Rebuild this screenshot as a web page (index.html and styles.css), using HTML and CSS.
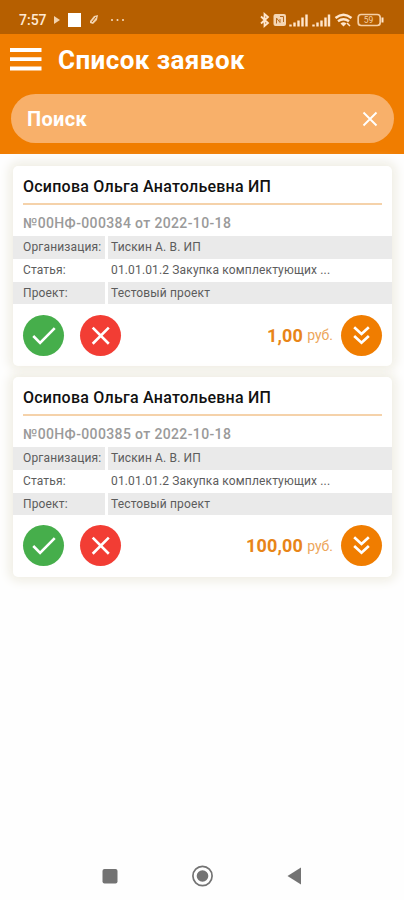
FILE: index.html
```html
<!DOCTYPE html>
<html lang="ru">
<head>
<meta charset="utf-8">
<title>Список заявок</title>
<link rel="stylesheet" href="styles.css">
</head>
<body>
<svg class="defs" width="0" height="0" aria-hidden="true">
  <symbol id="check" viewBox="0 0 42 42"><path d="M10.500 21.500l7 7L32.500 13.500"/></symbol>
  <symbol id="cross" viewBox="0 0 42 42"><path d="M13 13l16.500 16.500M29.500 13L13 29.500"/></symbol>
  <symbol id="more" viewBox="0 0 42 42"><path d="M13.500 12.500l7.500 7 7.500-7M13.500 21.500l7.500 7 7.500-7"/></symbol>
</svg>
<div class="status">
  <span class="clock">7:57</span>
  <svg class="status-left" width="76" height="16" viewBox="50 12 76 16">
    <path d="M54 16l6 4-6 4z" fill="#f2d2ae"/>
    <rect x="68" y="13" width="13" height="14" fill="#fff"/>
    <path d="M90 21l4-5 4-1-1 5-4 4-3-1z" fill="#f2d2ae"/><path d="M92 22l4-5" stroke="#b85f00"/>
    <g fill="#f7dfc4"><circle cx="112" cy="20" r="1"/><circle cx="117.500" cy="20" r="1"/><circle cx="123" cy="20" r="1"/></g>
  </svg>
  <svg class="status-right" width="126" height="16" viewBox="259 12 126 16" fill="none" stroke="#ffe6cc">
    <path d="M261 16.500l7 6.500-3.500 3V14l3.500 3-7 6.500" stroke-width="1.800"/>
    <rect x="273.500" y="14" width="12.500" height="12" rx="2" fill="#f5d6b3" stroke="none"/>
    <path d="M276.500 23.500V18l3.500 4.500V19M280 16.500h3.500V22" stroke="#b86a1c" stroke-width="1"/>
    <path d="M290.500 26.500v-2M294.500 26.500v-4M298.500 26.500v-6M302.500 26.500v-9M306.500 26.500V14.500" stroke-width="2.400"/>
    <path d="M313.500 26.500v-2M317.500 26.500v-4M321.500 26.500v-6M325.500 26.500v-9M329 26.500V14.500" stroke-width="2.400"/>
    <path d="M335.500 18q8-6.500 16 0M338 21.200q5.500-4 11 0" stroke-width="2.400"/>
    <path d="M340.500 23.500q3-2.500 6 0l-3 3z" fill="#ffe6cc" stroke="none"/><path d="M347 23l3 3" stroke-width="1.500"/>
    <rect x="358.200" y="14.500" width="22" height="11" rx="3" stroke="#f5cfa5" stroke-width="1.700"/>
    <path d="M382.500 17.500v5" stroke-width="2"/>
    <text class="battery" x="368.500" y="23.200" text-anchor="middle">59</text>
  </svg>
</div>
<header class="header">
  <div class="titlebar">
    <svg width="32" height="23" viewBox="0 0 32 23"><path d="M0 2h31.500M0 11.200h31.500M0 20.500h31.500" stroke="#fff" stroke-width="3.800"/></svg>
    <h1 class="title">Список заявок</h1>
  </div>
  <div class="search">
    <span>Поиск</span>
    <svg width="16" height="16" viewBox="0 0 16 16"><path d="M1.500 1.500l13 13M14.500 1.500l-13 13" stroke="#fff" stroke-width="1.900"/></svg>
  </div>
</header>
<main class="list">
  <article class="card">
    <h2 class="name">Осипова Ольга Анатольевна ИП</h2>
    <div class="number">№00НФ-000384 от 2022-10-18</div>
    <dl class="fields">
      <dt>Организация:</dt><dd>Тискин А. В. ИП</dd>
      <dt class="plain">Статья:</dt><dd class="plain">01.01.01.2 Закупка комплектующих ...</dd>
      <dt>Проект:</dt><dd>Тестовый проект</dd>
    </dl>
    <div class="actions">
      <svg class="btn ok"><use href="#check"/></svg>
      <svg class="btn no"><use href="#cross"/></svg>
      <span class="sum">1,00</span><span class="rub">руб.</span>
      <svg class="btn more"><use href="#more"/></svg>
    </div>
  </article>
  <article class="card">
    <h2 class="name">Осипова Ольга Анатольевна ИП</h2>
    <div class="number">№00НФ-000385 от 2022-10-18</div>
    <dl class="fields">
      <dt>Организация:</dt><dd>Тискин А. В. ИП</dd>
      <dt class="plain">Статья:</dt><dd class="plain">01.01.01.2 Закупка комплектующих ...</dd>
      <dt>Проект:</dt><dd>Тестовый проект</dd>
    </dl>
    <div class="actions">
      <svg class="btn ok"><use href="#check"/></svg>
      <svg class="btn no"><use href="#cross"/></svg>
      <span class="sum">100,00</span><span class="rub">руб.</span>
      <svg class="btn more"><use href="#more"/></svg>
    </div>
  </article>
</main>
<nav class="navbar">
  <svg width="202" height="24" viewBox="101 864 202 24">
    <rect x="102.500" y="869" width="15" height="14.500" rx="2" fill="#737373"/>
    <circle cx="202.500" cy="876" r="9.600" fill="none" stroke="#737373" stroke-width="1.700"/>
    <circle cx="202.500" cy="876" r="5.800" fill="#737373"/>
    <path d="M287.500 876l13.500-8.500v17z" fill="#737373"/>
  </svg>
</nav>
</body>
</html>
```
FILE: styles.css
```css
* { box-sizing: border-box; }
body {
  margin: 0;
  height: 900px;
  display: flex;
  flex-direction: column;
  background: #fefefe;
  font-family: Roboto, "Liberation Sans", sans-serif;
  overflow: hidden;
}
svg { display: block; flex: none; }
.defs { position: absolute; }
.status {
  height: 34px;
  background: #b65f00;
  display: flex;
  align-items: center;
  padding: 6px 19px 0;
}
.clock { width: 31px; font-size: 14px; line-height: 16px; font-weight: 500; color: #ffe9d2; }
.status-right { margin-left: auto; }
.battery { font-size: 8.500px; fill: #f5cfa5; stroke: none; }
.header { height: 119.500px; background: #f07d00; padding: 0 10px 0 11px; }
.titlebar { height: 60px; display: flex; align-items: center; padding-bottom: 9px; }
.titlebar svg { margin-left: -1.500px; }
.title { margin: 0 0 0 16.500px; font-size: 26px; line-height: 30px; font-weight: 700; letter-spacing: 0.420px; color: #fff; white-space: nowrap; }
.search {
  height: 49px;
  border-radius: 25px;
  background: #f8b06a;
  color: #fff;
  font-size: 20px;
  font-weight: 700;
  letter-spacing: 0.300px;
  display: flex;
  align-items: center;
  justify-content: space-between;
  padding: 0 16px;
}
.list { display: flex; flex-direction: column; gap: 10.700px; padding: 12.500px 12px 0 13px; }
.card {
  height: 200px;
  border-radius: 5px;
  background: #fff;
  box-shadow: 0 0 11px 4px #efede3;
  white-space: nowrap;
}
.name {
  margin: 0 10px;
  height: 39px;
  border-bottom: 2px solid #f5d2aa;
  font-size: 16px;
  line-height: 41px;
  font-weight: 500;
  letter-spacing: 0.240px;
  color: #111;
}
.number { height: 31px; padding-left: 10px; font-size: 14px; line-height: 37px; font-weight: 500; letter-spacing: 0.370px; color: #9a9a9a; }
.fields {
  margin: 0;
  display: grid;
  grid-template-columns: 92px 1fr;
  grid-template-rows: 23px 23px 22px;
  column-gap: 3px;
  font-size: 12px;
  line-height: 23px;
  letter-spacing: 0.150px;
  color: #5c5c5c;
}
.fields dt, .fields dd { margin: 0; background: #eaeaea; }
.fields dt { padding-left: 10px; }
.fields dd { padding-left: 3px; }
.fields .plain { background: none; }
.actions { display: flex; align-items: center; height: 62px; padding: 0 10px; }
.btn { width: 41px; height: 41px; border-radius: 50%; fill: none; stroke: #fff; stroke-width: 2.700; }
.ok { background: #46ae4b; }
.no { background: #f23d34; margin-left: 16px; }
.more { background: #f07d00; margin-left: 8px; }
.sum { margin-left: auto; font-size: 18px; font-weight: 700; letter-spacing: 0.200px; color: #e88518; }
.rub { margin-left: 4px; font-size: 14px; color: #eda65b; }
.navbar { margin-top: auto; height: 48px; display: flex; justify-content: center; align-items: center; }
```
